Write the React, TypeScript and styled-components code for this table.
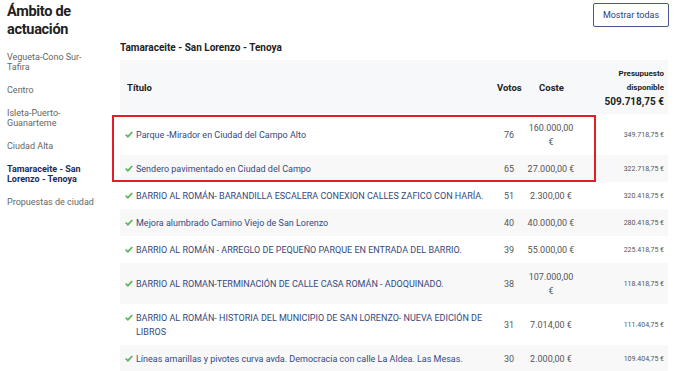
import React from 'react';
import styled, { createGlobalStyle } from 'styled-components';

const GlobalStyle = createGlobalStyle`
  body {
    margin: 0;
    background: #fff;
    font-family: Roboto, "Liberation Sans", sans-serif;
  }
`;

const Page = styled.div`
  display: flex;
  width: 700px;
  height: 371px;
  overflow: hidden;
`;

const Sidebar = styled.aside`
  width: 120px;
  flex-shrink: 0;
  padding: 3px 0 0 7px;
  box-sizing: border-box;
`;

const SideTitle = styled.h2`
  margin: 0 0 13px;
  font-size: 14.5px;
  line-height: 18px;
  font-weight: 700;
  letter-spacing: -0.3px;
  color: #222;
`;

const SideItem = styled.a<{ $active?: boolean }>`
  display: block;
  width: 96px;
  font-size: 9px;
  line-height: 10px;
  margin-bottom: 13px;
  color: ${p => (p.$active ? '#1b2b5e' : '#666')};
  font-weight: ${p => (p.$active ? 700 : 400)};
  text-decoration: none;
`;

const Main = styled.main`
  flex: 1;
  padding: 3px 32px 0 0;
  display: flex;
  flex-direction: column;
`;

const TopBar = styled.div`
  display: flex;
  justify-content: flex-end;
  margin-right: -1px;
`;

const ShowAllButton = styled.button`
  font-family: inherit;
  font-size: 9px;
  color: #2c3e73;
  background: #fff;
  border: 1px solid #4a5a88;
  border-radius: 2px;
  width: 76px;
  height: 24px;
  padding: 0;
`;

const AreaTitle = styled.h3`
  margin: 15px 0 6px;
  font-size: 10px;
  line-height: 12px;
  font-weight: 700;
  color: #222;
`;

const TableWrap = styled.div`
  position: relative;
`;

const Table = styled.table`
  width: 100%;
  border-collapse: collapse;
  table-layout: fixed;
  font-size: 9px;
  color: #34497a;
`;

const Th = styled.th<{ $align?: string; $w?: number; $pr?: number }>`
  background: #f7f8f9;
  font-size: 9.5px;
  font-weight: 700;
  color: #222;
  text-align: ${p => p.$align || 'left'};
  padding: 0 ${p => p.$pr ?? 6}px 0 7px;
  height: 54px;
  box-sizing: border-box;
  width: ${p => (p.$w ? `${p.$w}px` : 'auto')};
`;

const BudgetHead = styled.div`
  font-size: 8px;
  line-height: 14px;
`;

const BudgetTotal = styled.div`
  font-size: 10px;
  line-height: 13px;
`;

const Tr = styled.tr`
  &:nth-child(even) td {
    background: #f8f8f9;
  }
`;

const Td = styled.td<{ $align?: string; $pr?: number }>`
  padding: 6.5px ${p => p.$pr ?? 6}px;
  line-height: 14px;
  text-align: ${p => p.$align || 'left'};
  vertical-align: middle;
`;

const TitleCell = styled(Td)`
  padding-left: 5px;
  padding-right: 4px;
`;

const TitleLine = styled.div`
  display: flex;
  align-items: flex-start;
  gap: 3px;
`;

const CheckMark = styled.svg`
  flex-shrink: 0;
  margin-top: 3px;
`;

const Num = styled(Td)`
  color: #555;
`;

const Remaining = styled(Td)`
  font-size: 7px;
  color: #555;
`;

const Highlight = styled.div`
  position: absolute;
  left: -8px;
  top: 55px;
  width: 484px;
  height: 67px;
  border: 2.5px solid #e01e26;
  box-sizing: border-box;
  pointer-events: none;
`;

const rows = [
  { t: 'Parque -Mirador en Ciudad del Campo Alto', v: 76, c: '160.000,00 €', r: '349.718,75 €' },
  { t: 'Sendero pavimentado en Ciudad del Campo', v: 65, c: '27.000,00 €', r: '322.718,75 €' },
  { t: 'BARRIO AL ROMÁN- BARANDILLA ESCALERA CONEXION CALLES ZAFICO CON HARÍA.', v: 51, c: '2.300,00 €', r: '320.418,75 €' },
  { t: 'Mejora alumbrado Camino Viejo de San Lorenzo', v: 40, c: '40.000,00 €', r: '280.418,75 €' },
  { t: 'BARRIO AL ROMÁN - ARREGLO DE PEQUEÑO PARQUE EN ENTRADA DEL BARRIO.', v: 39, c: '55.000,00 €', r: '225.418,75 €' },
  { t: 'BARRIO AL ROMAN-TERMINACIÓN DE CALLE CASA ROMÁN - ADOQUINADO.', v: 38, c: '107.000,00 €', r: '118.418,75 €' },
  { t: 'BARRIO AL ROMÁN- HISTORIA DEL MUNICIPIO DE SAN LORENZO- NUEVA EDICIÓN DE LIBROS', v: 31, c: '7.014,00 €', r: '111.404,75 €' },
  { t: 'Líneas amarillas y pivotes curva avda. Democracia con calle La Aldea. Las Mesas.', v: 30, c: '2.000,00 €', r: '109.404,75 €' },
];

const CheckIcon = () => (
  <CheckMark width="8" height="7" viewBox="0 0 8 7">
    <path d="M0.7 3.7 L2.9 5.7 L7.3 1" fill="none" stroke="#5cb85c" strokeWidth="1.8" />
  </CheckMark>
);

export default function App() {
  return (
    <Page>
      <GlobalStyle />
      <Sidebar>
        <SideTitle>Ámbito de actuación</SideTitle>
        <SideItem>Vegueta-Cono Sur-Tafira</SideItem>
        <SideItem>Centro</SideItem>
        <SideItem>Isleta-Puerto-Guanarteme</SideItem>
        <SideItem>Ciudad Alta</SideItem>
        <SideItem $active>Tamaraceite - San Lorenzo - Tenoya</SideItem>
        <SideItem>Propuestas de ciudad</SideItem>
      </Sidebar>
      <Main>
        <TopBar>
          <ShowAllButton>Mostrar todas</ShowAllButton>
        </TopBar>
        <AreaTitle>Tamaraceite - San Lorenzo - Tenoya</AreaTitle>
        <TableWrap>
          <Table>
            <thead>
              <tr>
                <Th>Título</Th>
                <Th $align="right" $w={30} $pr={1}>Votos</Th>
                <Th $align="center" $w={62}>Coste</Th>
                <Th $align="right" $w={86} $pr={4}>
                  <BudgetHead>Presupuesto<br />disponible</BudgetHead>
                  <BudgetTotal>509.718,75 €</BudgetTotal>
                </Th>
              </tr>
            </thead>
            <tbody>
              {rows.map(row => (
                <Tr key={row.t}>
                  <TitleCell>
                    <TitleLine>
                      <CheckIcon />
                      <span>{row.t}</span>
                    </TitleLine>
                  </TitleCell>
                  <Num $align="right">{row.v}</Num>
                  <Num $align="center">{row.c}</Num>
                  <Remaining $align="right" $pr={4}>{row.r}</Remaining>
                </Tr>
              ))}
            </tbody>
          </Table>
          <Highlight />
        </TableWrap>
      </Main>
    </Page>
  );
}
